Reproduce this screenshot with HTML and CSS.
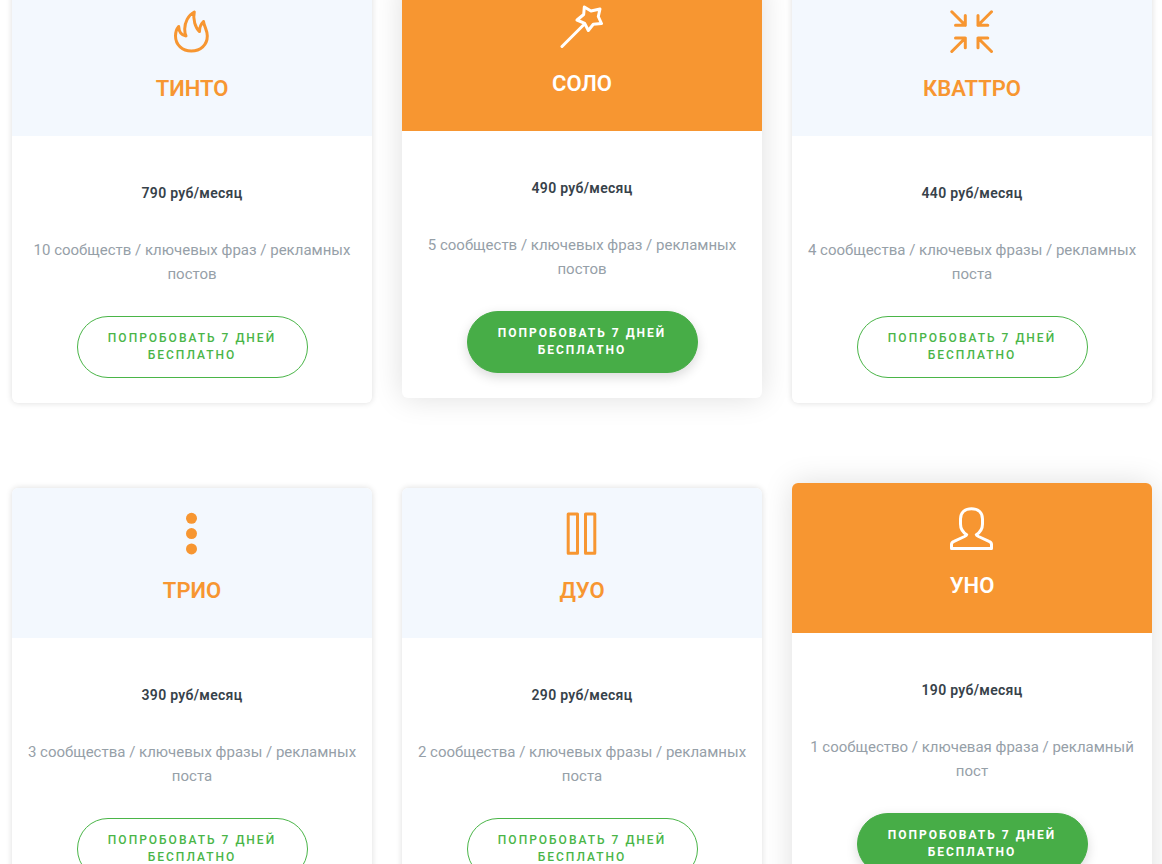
FILE: index.html
```
<!DOCTYPE html>
<html lang="ru">
<head>
<meta charset="utf-8">
<meta name="viewport" content="width=device-width, initial-scale=1">
<title>Тарифы</title>
<link rel="stylesheet" href="styles.css">
</head>
<body>
<main class="plans">
  <article class="plan">
    <header class="plan-head">
      <svg class="plan-icon" viewBox="0 0 44 44" aria-hidden="true"><path d="M24.300 2C18 5 14.700 13 14.700 19C14.700 22 15.300 24.500 16 26C11.500 25.500 9 21.500 8.700 16.500C6.500 19 5.500 22.500 5.500 26C5.500 35 12.500 41 21.300 41C30.500 41 37.300 35 37.300 26C37.300 20 34.500 17.500 33.500 11.500C31 14 29.500 17.500 29.500 21.500C25.500 18 22.500 9 24.300 2Z"/></svg>
      <h2 class="plan-name">ТИНТО</h2>
    </header>
    <div class="plan-body">
      <p class="plan-price">790 руб/месяц</p>
      <p class="plan-text">10 сообществ / ключевых фраз / рекламных постов</p>
      <a class="plan-button" href="#">Попробовать 7 дней бесплатно</a>
    </div>
  </article>
  <article class="plan plan-featured">
    <header class="plan-head">
      <svg class="plan-icon" viewBox="0 0 44 44" aria-hidden="true"><path d="M2 41.500L23.500 20M24.300 2L31 6L40 4L38.300 11.500L41.500 18.500L33.300 19.300L28.300 25.500L24.700 18.300L17 15L23.700 9.500Z"/></svg>
      <h2 class="plan-name">СОЛО</h2>
    </header>
    <div class="plan-body">
      <p class="plan-price">490 руб/месяц</p>
      <p class="plan-text">5 сообществ / ключевых фраз / рекламных постов</p>
      <a class="plan-button" href="#">Попробовать 7 дней бесплатно</a>
    </div>
  </article>
  <article class="plan">
    <header class="plan-head">
      <svg class="plan-icon" viewBox="0 0 44 44" aria-hidden="true"><path d="M1.800 1.800L15.300 15.300M5.500 15.300H15.300V5.500M41.500 1.800L28 15.300M28 5.500V15.300H37.800M1.800 41.500L15.300 28M5.500 28H15.300V37.800M41.500 41.500L28 28M28 37.800V28H37.800"/></svg>
      <h2 class="plan-name">КВАТТРО</h2>
    </header>
    <div class="plan-body">
      <p class="plan-price">440 руб/месяц</p>
      <p class="plan-text">4 сообщества / ключевых фразы / рекламных поста</p>
      <a class="plan-button" href="#">Попробовать 7 дней бесплатно</a>
    </div>
  </article>
  <article class="plan">
    <header class="plan-head">
      <svg class="plan-icon plan-icon-solid" viewBox="0 0 44 44" aria-hidden="true"><circle cx="21.500" cy="6.300" r="5.500"/><circle cx="21.500" cy="21.600" r="5.500"/><circle cx="21.500" cy="36.900" r="5.500"/></svg>
      <h2 class="plan-name">ТРИО</h2>
    </header>
    <div class="plan-body">
      <p class="plan-price">390 руб/месяц</p>
      <p class="plan-text">3 сообщества / ключевых фразы / рекламных поста</p>
      <a class="plan-button" href="#">Попробовать 7 дней бесплатно</a>
    </div>
  </article>
  <article class="plan">
    <header class="plan-head">
      <svg class="plan-icon" viewBox="0 0 44 44" aria-hidden="true"><rect x="8.200" y="2" width="9.300" height="39.300"/><rect x="25.500" y="2" width="9.300" height="39.300"/></svg>
      <h2 class="plan-name">ДУО</h2>
    </header>
    <div class="plan-body">
      <p class="plan-price">290 руб/месяц</p>
      <p class="plan-text">2 сообщества / ключевых фразы / рекламных поста</p>
      <a class="plan-button" href="#">Попробовать 7 дней бесплатно</a>
    </div>
  </article>
  <article class="plan plan-featured">
    <header class="plan-head">
      <svg class="plan-icon" viewBox="0 0 44 44" aria-hidden="true"><path d="M21.500 1.700C14.500 1.700 10.500 6 10.500 12V17C10.500 22 14 26 16.700 27.700C16.500 28.500 15.500 29 14.500 29.500L4 34.300C2.300 35 1.500 36 1.500 37.500V41.500H41.500V37.500C41.500 36 40.700 35 39 34.300L28.500 29.500C27.500 29 26.500 28.500 26.300 27.700C29 26 32.500 22 32.500 17V12C32.500 6 28.500 1.700 21.500 1.700Z"/></svg>
      <h2 class="plan-name">УНО</h2>
    </header>
    <div class="plan-body">
      <p class="plan-price">190 руб/месяц</p>
      <p class="plan-text">1 сообщество / ключевая фраза / рекламный пост</p>
      <a class="plan-button" href="#">Попробовать 7 дней бесплатно</a>
    </div>
  </article>
</main>
</body>
</html>
```
FILE: styles.css
```
* {
  box-sizing: border-box;
}

html {
  scrollbar-width: none;
}

body {
  margin: 0;
  background: #fff;
  font-family: Roboto, "Noto Sans", sans-serif;
  text-align: center;
}

.plans {
  display: grid;
  grid-template-columns: repeat(auto-fit, minmax(320px, 1fr));
  gap: 85px 30px;
  margin-top: -14px;
  padding: 0 10px 85px 12px;
}

.plan {
  border-radius: 6px;
  background: #fff;
  box-shadow: 0 0 6px rgba(0, 0, 0, 0.14);
  color: #f79631;
}

.plan-head {
  display: flex;
  flex-direction: column;
  align-items: center;
  gap: 19px;
  padding: 24px 0 31px;
  border-radius: 6px 6px 0 0;
  background: #f3f8fe;
}

.plan-icon {
  width: 44px;
  height: 44px;
  fill: none;
  stroke: currentColor;
  stroke-width: 3;
  stroke-linecap: round;
  stroke-linejoin: round;
}

.plan-icon-solid {
  fill: currentColor;
  stroke: none;
}

.plan-name {
  margin: 0;
  font-size: 22px;
  font-weight: 600;
  line-height: 32px;
}

.plan-body {
  display: flex;
  flex-direction: column;
  align-items: center;
  padding: 45px 15px 25px;
}

.plan-price {
  margin: 0 0 33px;
  color: #37424a;
  font-size: 14px;
  font-weight: 600;
  line-height: 24px;
  letter-spacing: 0.02em;
}

.plan-text {
  margin: 0 0 30px;
  color: #96a0a8;
  font-size: 15px;
  line-height: 24px;
}

.plan-button {
  width: 70%;
  padding: 13px 28px;
  border: 1px solid #4ab548;
  border-radius: 31px;
  color: #4ab548;
  font-size: 12px;
  font-weight: 500;
  line-height: 17px;
  letter-spacing: 2px;
  text-transform: uppercase;
  text-decoration: none;
}

.plan-featured {
  margin: -5px 0 5px;
  box-shadow: 0 0 30px rgba(0, 0, 0, 0.13);
}

.plan-featured .plan-head {
  background: #f79631;
  color: #fff;
}

.plan-featured .plan-button {
  border-color: #47ad47;
  background: #47ad47;
  box-shadow: 0 4px 12px rgba(0, 0, 0, 0.15);
  color: #fff;
  font-weight: 700;
}
```
